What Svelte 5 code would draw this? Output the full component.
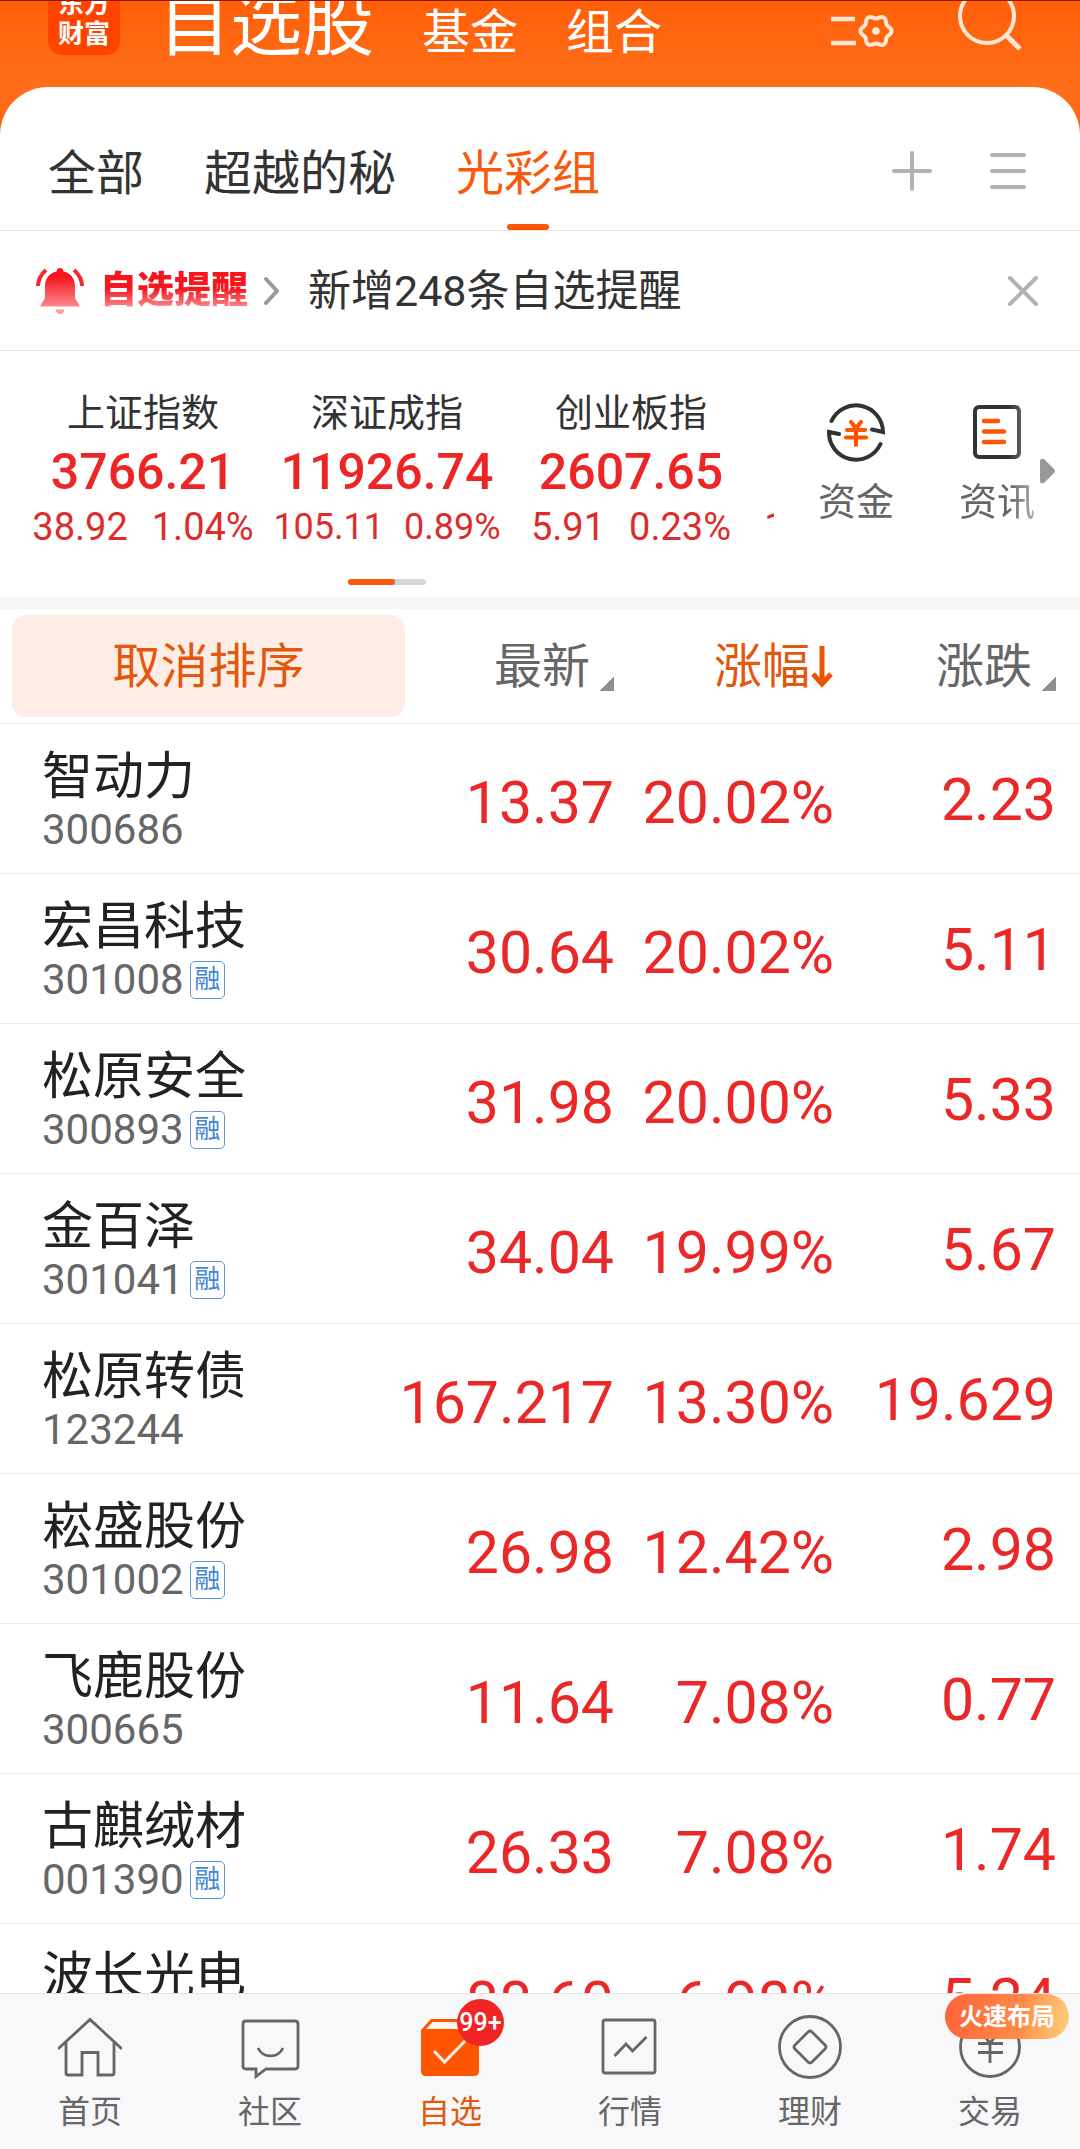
<script lang="ts">
  interface Quote {
    name: string;
    code: string;
    margin?: boolean;
    price: string;
    percent: string;
    change: string;
  }

  const groups = ['全部', '超越的秘', '光彩组'];
  let activeGroup = $state('光彩组');
  let showNotice = $state(true);

  const indices = [
    { name: '上证指数', value: '3766.21', change: '38.92', percent: '1.04%' },
    { name: '深证成指', value: '11926.74', change: '105.11', percent: '0.89%', small: true },
    { name: '创业板指', value: '2607.65', change: '5.91', percent: '0.23%' },
    { name: '科创50', value: '1101.29', change: '14.61', percent: '1.34%' },
  ];

  const quotes: Quote[] = [
    { name: '智动力', code: '300686', price: '13.37', percent: '20.02%', change: '2.23' },
    { name: '宏昌科技', code: '301008', margin: true, price: '30.64', percent: '20.02%', change: '5.11' },
    { name: '松原安全', code: '300893', margin: true, price: '31.98', percent: '20.00%', change: '5.33' },
    { name: '金百泽', code: '301041', margin: true, price: '34.04', percent: '19.99%', change: '5.67' },
    { name: '松原转债', code: '123244', price: '167.217', percent: '13.30%', change: '19.629' },
    { name: '崧盛股份', code: '301002', margin: true, price: '26.98', percent: '12.42%', change: '2.98' },
    { name: '飞鹿股份', code: '300665', price: '11.64', percent: '7.08%', change: '0.77' },
    { name: '古麒绒材', code: '001390', margin: true, price: '26.33', percent: '7.08%', change: '1.74' },
    { name: '波长光电', code: '301421', margin: true, price: '88.60', percent: '6.98%', change: '5.24' },
  ];

  const navItems = [
    { id: 'home', label: '首页' },
    { id: 'community', label: '社区' },
    { id: 'watchlist', label: '自选', badge: '99+' },
    { id: 'market', label: '行情' },
    { id: 'wealth', label: '理财' },
    { id: 'trade', label: '交易', promo: '火速布局' },
  ];
  let activeNav = $state('watchlist');

  // six-lobed outline of the settings gear
  function gearPath(cx: number, cy: number, radius: number, depth: number) {
    const points: string[] = [];
    for (let i = 0; i < 72; i++) {
      const a = (i / 72) * Math.PI * 2;
      const r = radius + depth * Math.cos(6 * a);
      points.push(`${(cx + r * Math.cos(a)).toFixed(2)} ${(cy + r * Math.sin(a)).toFixed(2)}`);
    }
    return `M${points.join('L')}Z`;
  }
</script>

{#snippet navIcon(id: string)}
  <svg class="nav-icon" viewBox="0 0 64 64" aria-hidden="true">
    {#if id === 'home'}
      <path d="M0 34 32 4.500 64 34M8 27V58Q8 60 10 60H24V37.500H40V60H54Q56 60 56 58V27" />
    {:else if id === 'community'}
      <path d="M8 6H57Q60 6 60 9V51Q60 54 57 54H28L18 61.500V54H8Q5 54 5 51V9Q5 6 8 6Z" />
      <path d="M20 33C25 43.500 40 43.500 45 33" />
    {:else if id === 'watchlist'}
      <path class="solid" d="M3 15 13 4H51L61 15V56Q61 61 56 61H8Q3 61 3 56Z" />
      <path class="lid" d="M8 14 14.500 7H50L56 14Z" />
      <path class="tick" d="M16 36 26.500 47 47 26" />
    {:else if id === 'market'}
      <rect x="5" y="5" width="52" height="53" rx="2" />
      <path d="M16.500 41 28 29 34.500 36 48.500 22" />
    {:else if id === 'wealth'}
      <circle cx="32" cy="32" r="30.500" />
      <path d="M30 17 Q32 15 34 17L47 30Q49 32 47 34L34 47Q32 49 30 47L17 34Q15 32 17 30Z" />
    {:else}
      <circle cx="32" cy="32" r="29.500" />
      <path d="M22 16 32 28 42 16M20 28.500H45M20 37.500H45M32 28V48" />
    {/if}
  </svg>
{/snippet}

<div class="app">
  <header class="topbar">
    <div class="logo"><span>东方</span><span>财富</span></div>
    <nav class="sections">
      <a class="section section--active" href="#stocks">自选股<i class="dot"></i></a>
      <a class="section" href="#funds">基金</a>
      <a class="section" href="#portfolio">组合</a>
    </nav>
    <button class="icon-button" type="button" aria-label="设置">
      <svg width="64" height="40" viewBox="0 0 64 40" fill="none" stroke="#ffe6d4" stroke-width="4.500">
        <path d="M1 8H25M1 32H26" />
        <path d={gearPath(46, 20, 14, 1.6)} stroke-width="4" stroke-linejoin="round" />
        <circle cx="46" cy="20" r="3.800" fill="#ffe6d4" stroke="none" />
      </svg>
    </button>
    <button class="icon-button" type="button" aria-label="搜索">
      <svg width="64" height="64" viewBox="0 0 64 64" fill="none" stroke="#ffe6d4" stroke-width="4">
        <circle cx="29" cy="29" r="27" />
        <path d="M48 48 62 62" stroke-width="5" />
      </svg>
    </button>
  </header>

  <main class="sheet">
    <div class="groups">
      {#each groups as group}
        <button
          type="button"
          class="group"
          class:group--active={group === activeGroup}
          onclick={() => (activeGroup = group)}
        >
          {group}
        </button>
      {/each}
      <div class="tools">
        <button type="button" aria-label="添加">
          <svg width="40" height="40" viewBox="0 0 40 40"><path d="M2 20H38M20 2V38" /></svg>
        </button>
        <button type="button" aria-label="管理分组">
          <svg width="40" height="40" viewBox="0 0 40 40"><path d="M4 4H36M4 20H36M4 36H36" /></svg>
        </button>
      </div>
    </div>

    {#if showNotice}
      <div class="notice">
        <svg class="bell" width="48" height="48" viewBox="0 0 48 48" aria-hidden="true">
          <defs>
            <linearGradient id="bell-fill" x1="0" y1="0" x2="0" y2="48" gradientUnits="userSpaceOnUse">
              <stop offset="0.200" stop-color="#f8151d" />
              <stop offset="1" stop-color="#fba9ab" />
            </linearGradient>
          </defs>
          <path
            fill="url(#bell-fill)"
            d="M24 1C26 1 27 2 27.500 4.500C35 6 39 12 39 19V30C39 33 43 36 44 39.500H4C5 36 9 33 9 30V19C9 12 13 6 20.500 4.500C21 2 22 1 24 1ZM19.500 42.500H28.500C28 45 26.500 47 24 47S20 45 19.500 42.500Z"
          />
          <path class="ring" d="M10 3Q2 10 2 19M38 3Q46 10 46 19" />
        </svg>
        <strong class="notice-title">自选提醒</strong>
        <svg class="chevron" width="16" height="30" viewBox="0 0 16 30" aria-hidden="true">
          <path d="M2 3 13 15 2 27" />
        </svg>
        <a class="notice-text" href="#alerts">新增248条自选提醒</a>
        <button class="close" type="button" aria-label="关闭" onclick={() => (showNotice = false)}>
          <svg width="30" height="30" viewBox="0 0 30 30"><path d="M2 2 28 28M28 2 2 28" /></svg>
        </button>
      </div>
    {/if}

    <section class="overview">
      <div class="ticker">
        <div class="ticker-track">
          {#each indices as index}
            <div class="index">
              <span class="index-name">{index.name}</span>
              <span class="index-value">{index.value}</span>
              <span class="index-change" class:index-change--small={index.small}>
                <span>{index.change}</span>
                <span>{index.percent}</span>
              </span>
            </div>
          {/each}
        </div>
        <div class="pager"><i></i></div>
      </div>
      <div class="shortcuts">
        <a class="shortcut" href="#capital">
          <svg width="60" height="60" viewBox="0 0 60 60" fill="none" aria-hidden="true">
            <g stroke="#333" stroke-width="4">
              <path d="M5.500 19A27 27 0 0 1 57 30L46 27.500" stroke-linecap="round" />
              <path d="M54.500 42A27 27 0 0 1 3 30L13 32" stroke-linecap="round" />
            </g>
            <path
              d="M25 20 30 26 35 20M21 28H39M20 35.500H40M30 27V43"
              stroke="#ff5500"
              stroke-width="4.200"
              stroke-linecap="round"
            />
          </svg>
          资金
        </a>
        <a class="shortcut shortcut--fade" href="#news">
          <svg width="60" height="60" viewBox="0 0 60 60" fill="none" aria-hidden="true">
            <rect x="8" y="5" width="44" height="50" rx="4" stroke="#333" stroke-width="4" />
            <path
              d="M17 19H31M17 29.500H37M17 40H37"
              stroke="#ff5500"
              stroke-width="4.500"
              stroke-linecap="round"
            />
          </svg>
          资讯
        </a>
        <svg class="more" width="16" height="26" viewBox="0 0 16 26" aria-hidden="true">
          <path d="M0 3Q0 0 4 1L14 11Q16 13 14 15L4 25Q0 26 0 23Z" />
        </svg>
      </div>
    </section>

    <div class="list">
      <table>
        <thead>
          <tr>
            <th class="col-name">
              <button class="reset-sort" type="button">取消排序</button>
            </th>
            <th class="col-price">
              <button class="sort" type="button">最新<i class="corner"></i></button>
            </th>
            <th class="col-percent">
              <button class="sort sort--active" type="button">
                涨幅<svg width="24" height="44" viewBox="0 0 24 44" aria-hidden="true">
                  <path d="M12 1V38M3 29 12 39 21 29" />
                </svg>
              </button>
            </th>
            <th class="col-change">
              <button class="sort" type="button">涨跌<i class="corner"></i></button>
            </th>
          </tr>
        </thead>
        <tbody>
          {#each quotes as quote (quote.code)}
            <tr>
              <td class="stock">
                <div class="stock-name">{quote.name}</div>
                <div class="stock-code">
                  {quote.code}
                  {#if quote.margin}<span class="tag">融</span>{/if}
                </div>
              </td>
              <td class="number">{quote.price}</td>
              <td class="number">{quote.percent}</td>
              <td class="number number--change">{quote.change}</td>
            </tr>
          {/each}
        </tbody>
      </table>
    </div>
  </main>

  <nav class="bottom-nav">
    {#each navItems as item}
      <button
        type="button"
        class="nav-item"
        class:nav-item--active={item.id === activeNav}
        onclick={() => (activeNav = item.id)}
      >
        {@render navIcon(item.id)}
        {item.label}
        {#if item.badge}<span class="badge">{item.badge}</span>{/if}
        {#if item.promo}<span class="promo">{item.promo}</span>{/if}
      </button>
    {/each}
  </nav>
</div>

<style>
  :global(body) {
    background: #fff;
    font-family: Roboto, 'Noto Sans CJK SC', sans-serif;
  }

  button {
    padding: 0;
    border: 0;
    background: none;
    font: inherit;
    color: inherit;
    cursor: pointer;
  }

  a {
    color: inherit;
    text-decoration: none;
  }

  svg {
    display: block;
    flex: none;
  }

  .app {
    display: flex;
    flex-direction: column;
    height: 100vh;
    overflow: hidden;
    background: linear-gradient(#ff5f08, #ff6e1a 88px, #ff6010 140px);
    color: #333;
  }

  .topbar {
    display: flex;
    align-items: flex-end;
    box-sizing: border-box;
    height: 87px;
    padding: 0 58px 32px 48px;
    border-top: 1px solid #8c1c00;
    overflow: hidden;
    color: #fff;
  }

  .logo {
    display: flex;
    flex-direction: column;
    align-items: center;
    justify-content: flex-end;
    flex: none;
    box-sizing: border-box;
    width: 72px;
    height: 72px;
    padding-bottom: 6px;
    border-radius: 14px;
    background: #ff4400;
    font-size: 26px;
    font-weight: 700;
    line-height: 30px;
  }

  .sections {
    display: flex;
    align-items: baseline;
    flex: 1;
    gap: 48px;
    margin: 0 0 -8px 38px;
    font-size: 48px;
    line-height: 60px;
  }

  .section {
    position: relative;
    white-space: nowrap;
  }

  .section--active {
    font-size: 72px;
  }

  .dot {
    position: absolute;
    top: -20px;
    right: -12px;
    width: 26px;
    height: 26px;
    border-radius: 50%;
    background: #d8141c;
  }

  .icon-button {
    align-self: flex-end;
    margin: 0 0 4px 64px;
  }

  .sheet {
    display: flex;
    flex-direction: column;
    flex: 1;
    min-height: 0;
    border-radius: 48px 48px 0 0;
    background: #fff;
  }

  .groups {
    display: flex;
    align-items: stretch;
    gap: 60px;
    flex: none;
    height: 143px;
    padding: 0 52px 0 48px;
    border-bottom: 1px solid #e4e4e4;
    font-size: 48px;
    line-height: 60px;
  }

  .group {
    position: relative;
    padding-top: 30px;
    white-space: nowrap;
  }

  .group--active {
    color: #f8590c;
  }

  .group--active::after {
    content: '';
    position: absolute;
    left: 50%;
    bottom: 0;
    width: 42px;
    height: 6px;
    margin-left: -21px;
    border-radius: 3px;
    background: #ff5500;
  }

  .tools {
    display: flex;
    align-items: center;
    gap: 56px;
    margin-left: auto;
    padding-top: 24px;
  }

  .tools svg,
  .close svg {
    fill: none;
    stroke: #b2b2b2;
    stroke-width: 4;
    stroke-linecap: round;
  }

  .notice {
    display: flex;
    align-items: center;
    flex: none;
    height: 119px;
    padding: 0 42px 0 36px;
    border-bottom: 1px solid #e4e4e4;
  }

  .ring {
    fill: none;
    stroke: #f52a30;
    stroke-width: 4;
  }

  .notice-title {
    margin: 0 16px 0 16px;
    background: linear-gradient(#f8151d 45%, #fba0a2 95%);
    background-clip: text;
    color: transparent;
    font-size: 37px;
    font-weight: 900;
    line-height: 44px;
  }

  .chevron {
    fill: none;
    stroke: #999;
    stroke-width: 4;
    stroke-linecap: round;
    stroke-linejoin: round;
  }

  .notice-text {
    margin-left: 28px;
    font-size: 43px;
    line-height: 52px;
    white-space: nowrap;
  }

  .close {
    margin-left: auto;
  }

  .overview {
    display: flex;
    flex: none;
    border-bottom: 12px solid #f5f7f9;
  }

  .ticker {
    flex: 1;
    min-width: 0;
    padding: 38px 0 12px;
    overflow: hidden;
  }

  .ticker-track {
    display: flex;
    padding-left: 21px;
  }

  .index {
    display: flex;
    flex-direction: column;
    align-items: center;
    flex: none;
    width: 244px;
    white-space: nowrap;
  }

  .index-name {
    font-size: 38px;
    line-height: 48px;
  }

  .index-value {
    margin-top: 5px;
    color: #ee2525;
    font-size: 50px;
    font-weight: 500;
    line-height: 60px;
  }

  .index-change {
    display: flex;
    gap: 24px;
    color: #dc2c2c;
    font-size: 38px;
    line-height: 50px;
  }

  .index-change--small {
    gap: 20px;
    font-size: 36px;
  }

  .pager {
    width: 78px;
    height: 6px;
    margin: 27px auto 0;
    border-radius: 3px;
    background: #d3d7dc;
  }

  .pager i {
    display: block;
    width: 47px;
    height: 6px;
    border-radius: 3px;
    background: #f8590c;
  }

  .shortcuts {
    display: flex;
    align-items: flex-start;
    flex: none;
    padding: 51px 24px 0 42px;
  }

  .shortcut {
    display: flex;
    flex-direction: column;
    align-items: center;
    gap: 16px;
    margin-right: 61px;
    width: 80px;
    color: #666;
    font-size: 38px;
    line-height: 48px;
    white-space: nowrap;
  }

  .shortcut--fade {
    margin-right: 3px;
    mask-image: linear-gradient(to right, #000 65%, rgba(0, 0, 0, 0.5));
  }

  .more {
    margin-top: 56px;
    fill: #999;
  }

  .list {
    flex: 1;
    min-height: 0;
    overflow: hidden;
  }

  table {
    width: 100%;
    table-layout: fixed;
    border-collapse: separate;
    border-spacing: 0;
  }

  th {
    box-sizing: border-box;
    height: 115px;
    padding: 0;
    border-bottom: 1px solid #ebebeb;
    font-size: 48px;
    font-weight: 400;
    line-height: 60px;
    text-align: right;
    vertical-align: middle;
  }

  .col-name {
    padding: 0 0 0 12px;
  }

  .col-price {
    width: 219px;
  }

  .col-percent {
    width: 220px;
  }

  .col-change {
    width: 246px;
    padding-right: 24px;
  }

  .reset-sort {
    display: block;
    width: calc(100% + 10px);
    height: 102px;
    padding-top: 2px;
    border-radius: 14px;
    background: #fdede4;
    color: #e2580e;
  }

  .sort {
    display: inline-flex;
    align-items: center;
    padding-top: 2px;
    color: #666;
    white-space: nowrap;
  }

  .sort--active {
    color: #e2580e;
  }

  .sort svg {
    fill: none;
    stroke: #ea5504;
    stroke-width: 5;
  }

  .corner {
    align-self: flex-end;
    width: 15px;
    height: 15px;
    margin: 0 0 6px 9px;
    background: linear-gradient(135deg, transparent 50%, #8e8e93 50%);
  }

  td {
    box-sizing: border-box;
    height: 150px;
    padding: 0;
    border-bottom: 1px solid #ebebeb;
    vertical-align: middle;
  }

  .stock {
    padding: 4px 0 0 42px;
  }

  .stock-name {
    color: #222;
    font-size: 51px;
    line-height: 58px;
    white-space: nowrap;
  }

  .stock-code {
    display: flex;
    align-items: center;
    gap: 6px;
    color: #666;
    font-size: 42px;
    line-height: 48px;
  }

  .tag {
    box-sizing: border-box;
    width: 35px;
    height: 38px;
    border: 1px solid #5b97d8;
    border-radius: 5px;
    color: #4486cf;
    font-size: 26px;
    line-height: 34px;
    text-align: center;
  }

  .number {
    padding-top: 8px;
    color: #ea2828;
    font-size: 59px;
    line-height: 70px;
    text-align: right;
    white-space: nowrap;
  }

  .number--change {
    padding: 2px 24px 0 0;
  }

  .bottom-nav {
    display: grid;
    grid-template-columns: repeat(6, 1fr);
    flex: none;
    box-sizing: border-box;
    height: 156px;
    border-top: 1px solid #e2e2e4;
    background: #f8f8fb;
  }

  .nav-item {
    position: relative;
    display: flex;
    flex-direction: column;
    align-items: center;
    gap: 13px;
    padding-top: 21px;
    color: #666;
    font-size: 32px;
    line-height: 40px;
  }

  .nav-item--active {
    color: #e2580e;
  }

  .nav-icon {
    width: 64px;
    height: 64px;
    fill: none;
    stroke: #666;
    stroke-width: 2.8;
  }

  .nav-icon .solid {
    fill: #ff5500;
    stroke: none;
  }

  .nav-icon .lid {
    fill: #fff3ec;
    stroke: none;
  }

  .nav-icon .tick {
    stroke: #fff0e6;
    stroke-width: 3;
  }

  .badge {
    position: absolute;
    top: 5px;
    left: 50%;
    width: 47px;
    height: 47px;
    margin-left: 7px;
    border-radius: 50%;
    background: #f02424;
    color: #fff;
    font-size: 25px;
    font-weight: 500;
    line-height: 48px;
    text-align: center;
  }

  .promo {
    position: absolute;
    top: 0;
    right: 11px;
    width: 124px;
    height: 45px;
    border-radius: 23px;
    background: linear-gradient(100deg, #ff6238, #ff8a48 60%, #ffd27c);
    color: #fff;
    font-size: 24px;
    font-weight: 700;
    line-height: 46px;
    text-align: center;
  }
</style>
